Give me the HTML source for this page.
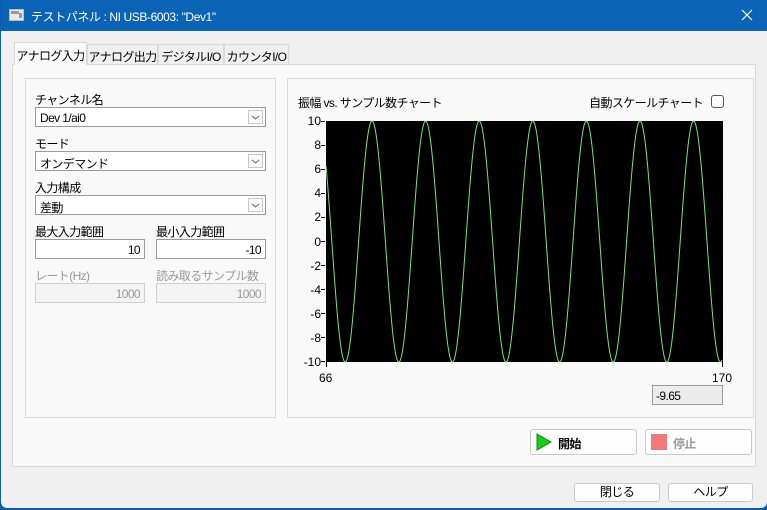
<!DOCTYPE html>
<html><head><meta charset="utf-8"><style>
*{box-sizing:border-box;margin:0;padding:0}
body{width:767px;height:510px;overflow:hidden;background:#0b5cad;font-family:"Liberation Sans","Noto Sans CJK JP",sans-serif;font-size:12px;color:#000;position:relative;letter-spacing:-0.6px}
.win{position:absolute;left:1px;top:0;width:766px;height:508px;background:#f0f0f0;border-radius:0 0 6px 6px}
.title{position:absolute;left:0;top:0;width:767px;height:31px;background:#0b63b6;color:#fff;font-size:12px}
.abs{position:absolute}
.tab{position:absolute;top:44px;height:21px;border:1px solid #d9d9d9;border-bottom:none;background:#f0f0f0;font-size:12px;padding:3px 0 0;text-align:center;white-space:nowrap;overflow:hidden}
.panel{position:absolute;left:11px;top:64px;width:744px;height:403px;background:#f9f9f9;border:1px solid #dadada}
.grp{position:absolute;border:1px solid #dcdcdc;background:#f9f9f9}
.lbl{position:absolute;font-size:12px;white-space:nowrap}
.box{position:absolute;height:20px;border:1px solid #9a9a9a;background:#fff;font-size:12px;padding:3px 4px 0;white-space:nowrap}
.dis{border-color:#cfcfcf;background:#f4f4f4;color:#9a9a9a;text-align:right}
.dd{position:absolute;right:2px;top:2px;width:15px;height:14px;border:1px solid #c8c8c8;background:#fafafa}
.btn{position:absolute;border:1px solid #c9c9c9;background:#fdfdfd;border-radius:3px;font-size:12px;text-align:center}
.yl{position:absolute;left:292px;width:28px;text-align:right;font-size:12px;letter-spacing:0}
</style></head><body>
<div class="win">
<div class="title">
 <div class="abs" style="left:8px;top:9px;width:15px;height:12px;background:#e8e8e8;border:1px solid #bbb"><div style="position:absolute;left:1px;top:1px;width:8px;height:3px;background:#999"></div><div style="position:absolute;right:1px;top:3px;width:3px;height:5px;background:#999"></div></div>
 <div class="abs" style="left:30px;top:8px;letter-spacing:-0.4px">テストパネル : NI USB-6003: "Dev1"</div>
 <svg class="abs" style="left:740px;top:9px" width="12" height="12"><path d="M1 1L11 11M11 1L1 11" stroke="#fff" stroke-width="1.2"/></svg>
</div>
<div class="tab" style="left:13px;top:42px;height:23px;background:#f9f9f9;z-index:2;width:73px;padding-top:4px">アナログ入力</div>
<div class="tab" style="left:86px;width:71px">アナログ出力</div>
<div class="tab" style="left:157px;width:66px">デジタルI/O</div>
<div class="tab" style="left:223px;width:65px">カウンタI/O</div>
<div class="panel"></div>
<div class="grp" style="left:24px;top:78px;width:251px;height:340px"></div>
<div class="grp" style="left:286px;top:78px;width:467px;height:340px"></div>

<div class="lbl" style="left:34px;top:91px">チャンネル名</div>
<div class="box" style="left:34px;top:107px;width:231px">Dev 1/ai0<div class="dd"><svg width="13" height="12"><path d="M3 5l3.5 3 3.5-3" fill="none" stroke="#666"/></svg></div></div>
<div class="lbl" style="left:34px;top:135px">モード</div>
<div class="box" style="left:34px;top:151px;width:231px">オンデマンド<div class="dd"><svg width="13" height="12"><path d="M3 5l3.5 3 3.5-3" fill="none" stroke="#666"/></svg></div></div>
<div class="lbl" style="left:34px;top:179px">入力構成</div>
<div class="box" style="left:34px;top:195px;width:231px">差動<div class="dd"><svg width="13" height="12"><path d="M3 5l3.5 3 3.5-3" fill="none" stroke="#666"/></svg></div></div>
<div class="lbl" style="left:34px;top:223px">最大入力範囲</div>
<div class="box" style="left:34px;top:239px;width:110px;text-align:right">10</div>
<div class="lbl" style="left:155px;top:223px">最小入力範囲</div>
<div class="box" style="left:155px;top:239px;width:110px;text-align:right">-10</div>
<div class="lbl" style="left:34px;top:267px;color:#9a9a9a">レート(Hz)</div>
<div class="box dis" style="left:34px;top:283px;width:110px">1000</div>
<div class="lbl" style="left:155px;top:267px;color:#9a9a9a">読み取るサンプル数</div>
<div class="box dis" style="left:155px;top:283px;width:110px">1000</div>

<div class="lbl" style="left:297px;top:94px">振幅 vs. サンプル数チャート</div>
<div class="lbl" style="right:64px;top:94px">自動スケールチャート</div>
<div class="abs" style="left:710px;top:95px;width:13px;height:13px;border:1px solid #555;border-radius:3px;background:#fff"></div>

<div class="yl" style="top:114px">10</div><div class="yl" style="top:138px">8</div><div class="yl" style="top:162px">6</div><div class="yl" style="top:186px">4</div><div class="yl" style="top:210px">2</div><div class="yl" style="top:235px">0</div><div class="yl" style="top:259px">-2</div><div class="yl" style="top:283px">-4</div><div class="yl" style="top:307px">-6</div><div class="yl" style="top:331px">-8</div><div class="yl" style="top:355px">-10</div>
<svg class="abs" style="left:-1px;top:0" width="767" height="400">
<rect x="326" y="121" width="397" height="241" fill="#000"/>
<g stroke="#000" stroke-width="1">
<path d="M321 121.5h4M321 145.5h4M321 169.5h4M321 193.5h4M321 217.5h4M321 241.5h4M321 265.5h4M321 289.5h4M321 313.5h4M321 337.5h4M321 361.5h4M326.5 362v5M722.5 362v5"/>
</g>
<polyline id="w" fill="none" stroke="#7ee07e" stroke-width="1"/>
</svg>
<div class="lbl" style="left:318px;top:371px;letter-spacing:0">66</div>
<div class="lbl" style="left:711px;top:371px;letter-spacing:0">170</div>
<div class="abs" style="left:651px;top:385px;width:71px;height:20px;border:1px solid #9a9a9a;background:#ececec;font-size:12px;padding:3px 3px 0">-9.65</div>

<div class="btn" style="left:529px;top:429px;width:107px;height:26px;text-align:left"><svg class="abs" style="left:5px;top:3px" width="16" height="18"><path d="M1 1L15 9L1 17Z" fill="#1ec81e" stroke="#0a8a0a"/></svg><span class="abs" style="left:27px;top:5px;font-weight:bold">開始</span></div>
<div class="btn" style="left:644px;top:429px;width:107px;height:26px;text-align:left"><div class="abs" style="left:5px;top:4px;width:16px;height:16px;background:#f07a7a"></div><span class="abs" style="left:27px;top:5px;font-weight:bold;color:#999">停止</span></div>
<div class="btn" style="left:573px;top:483px;width:86px;height:19px;line-height:17px">閉じる</div>
<div class="btn" style="left:667px;top:483px;width:85px;height:19px;line-height:17px">ヘルプ</div>
</div>
<script>
var p=[];for(var x=326;x<=722;x+=0.5){var v=10*Math.cos(2*Math.PI*(x-372)/53.6);p.push(x+","+(241.5-v*12.05).toFixed(1));}
document.getElementById("w").setAttribute("points",p.join(" "));
</script>
</body></html>
